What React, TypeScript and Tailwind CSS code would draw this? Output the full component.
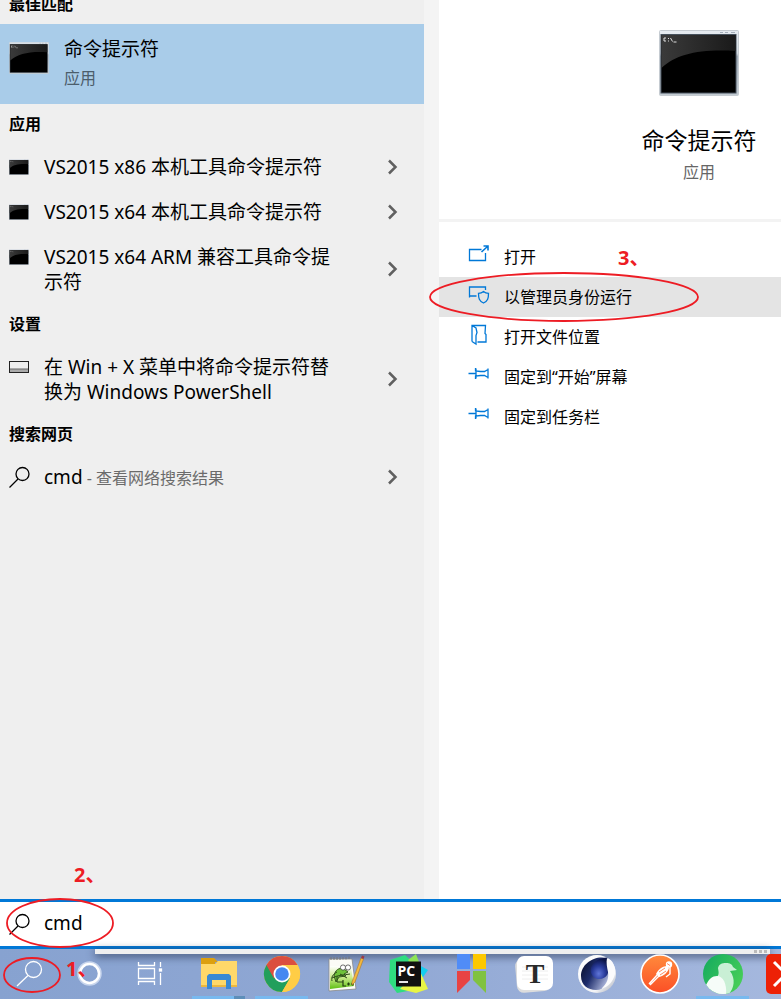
import React, { useState } from 'react';

type IconKind = 'console' | 'settings' | 'search';

interface ResultItem {
  icon: IconKind;
  title: string;
  note?: string;
}

interface ResultGroup {
  heading: string;
  items: ResultItem[];
}

const groups: ResultGroup[] = [
  {
    heading: '应用',
    items: [
      { icon: 'console', title: 'VS2015 x86 本机工具命令提示符' },
      { icon: 'console', title: 'VS2015 x64 本机工具命令提示符' },
      { icon: 'console', title: 'VS2015 x64 ARM 兼容工具命令提示符' },
    ],
  },
  {
    heading: '设置',
    items: [{ icon: 'settings', title: '在 Win + X 菜单中将命令提示符替换为 Windows PowerShell' }],
  },
  {
    heading: '搜索网页',
    items: [{ icon: 'search', title: 'cmd', note: '查看网络搜索结果' }],
  },
];

const ConsoleIcon: React.FC<{ id: string; className: string }> = ({ id, className }) => (
  <svg viewBox="0 0 80 66" preserveAspectRatio="none" className={className} aria-hidden="true">
    <defs>
      <linearGradient id={id} x1="0" y1="0" x2="1" y2="0">
        <stop offset="0" stopColor="#3a3a3a" />
        <stop offset="1" stopColor="#1a1a1a" />
      </linearGradient>
      <linearGradient id={`${id}-frame`} x1="0" y1="0" x2="0" y2="1">
        <stop offset="0" stopColor="#e6ebf0" />
        <stop offset="0.35" stopColor="#d5dde4" />
        <stop offset="0.4" stopColor="#9fabb6" />
        <stop offset="1" stopColor="#c3cbd2" />
      </linearGradient>
    </defs>
    <rect x="0.5" y="0.5" width="79" height="65" rx="1" fill={`url(#${id}-frame)`} stroke="#c5cbd1" />
    <path d="M61 2.5h3M66 2.5h3M72 2.5h4" stroke="#a3adb8" />
    <rect x="2" y="4.5" width="75" height="58.500" fill="#000" stroke="#46515c" />
    <path d="M2.500 5h74v16C40 19 18 24 2.500 38z" fill={`url(#${id})`} />
    <path d="M7 8H5v3h2M9.500 8v1M9.500 10.500v1M11.500 8l2 3.500M14.500 12h3" stroke="#ddd" fill="none" />
  </svg>
);

const SearchIcon: React.FC<{ className: string }> = ({ className }) => (
  <svg viewBox="0 0 22 22" className={className} fill="none" stroke="currentColor" strokeWidth="1.300" aria-hidden="true">
    <circle cx="13.500" cy="8" r="6.500" />
    <path d="M9 13 .5 21.500" />
  </svg>
);

const ResultIcon: React.FC<{ kind: IconKind; id: string }> = ({ kind, id }) => {
  if (kind === 'search') return <SearchIcon className="mt-px h-[22px] w-[22px]" />;
  if (kind === 'settings') {
    return (
      <svg viewBox="0 0 20 12" className="mt-1.5 h-3 w-5" aria-hidden="true">
        <path d="M1 9.500h18" stroke="#aaa" strokeWidth="3" />
        <path d="M1 8h18" stroke="#666" />
        <rect x="0.500" y="0.500" width="19" height="11" fill="none" stroke="#222" />
      </svg>
    );
  }
  return <ConsoleIcon id={id} className="mt-1 h-4 w-5" />;
};

const iconStroke = {
  viewBox: '0 0 22 22',
  className: 'h-[22px] w-[22px] text-[#0078d7]',
  fill: 'none',
  stroke: 'currentColor',
  strokeWidth: 1.300,
  'aria-hidden': true,
};

const pinIcon = (
  <svg {...iconStroke}>
    <path d="M.5 9.500h7M7.500 4v3l5 .5h4l3.500-2V13.500l-3.500-2h-4l-5 .5v3M8 4.500v10M20 4.500v10" />
  </svg>
);

const actions = [
  {
    label: '打开',
    icon: (
      <svg {...iconStroke}>
        <path d="M13.500 5.500H1.500v11h16V9" />
        <path d="m13.500 8 6-5.500M15.500 2h4.500v4.500" strokeWidth="1.600" />
      </svg>
    ),
  },
  {
    label: '以管理员身份运行',
    icon: (
      <svg {...iconStroke}>
        <path d="M17.500 6V3h-16v9h7M1.500 3v10.500" />
        <path d="M15.500 7.500c-1.500 1.300-3.200 1.800-5 1.800 0 5 .6 7.700 5 9.700 4.400-2 5-4.700 5-9.700-1.800 0-3.500-.5-5-1.800z" />
      </svg>
    ),
  },
  {
    label: '打开文件位置',
    icon: (
      <svg {...iconStroke}>
        <path d="M4 17.500V1.500h13.500l-.5 8 1 1v7.500H9.500M4 1.500 8 4l1 4.500-1 3v8.500l-4-2.500" />
      </svg>
    ),
  },
  { label: '固定到“开始”屏幕', icon: pinIcon },
  { label: '固定到任务栏', icon: pinIcon },
];

const AppIcon: React.FC<{ children: React.ReactNode }> = ({ children }) => (
  <svg viewBox="0 0 40 40" className="h-10 w-10" aria-hidden="true">
    {children}
  </svg>
);

const systemButtons = [
  {
    name: '搜索',
    icon: (
      <AppIcon>
        <g fill="none" stroke="#fff" strokeWidth="1.300">
          <circle cx="23.500" cy="15.500" r="8" />
          <path d="M18 21.500 7 32" />
        </g>
      </AppIcon>
    ),
  },
  {
    name: 'Cortana',
    icon: (
      <AppIcon>
        <circle cx="19.500" cy="19.500" r="11" fill="none" stroke="#c7d5ed" strokeWidth="2.500" />
        <circle cx="19.500" cy="19.500" r="9.500" fill="none" stroke="#fff" strokeWidth="2.500" />
      </AppIcon>
    ),
  },
  {
    name: '任务视图',
    icon: (
      <AppIcon>
        <g fill="none" stroke="#fff" strokeWidth="1.300">
          <path d="M8.500 8v3.500h16V8M8.500 31v-3.500h16V31M8.500 14.500h16v10h-16zM30.500 8v5M30.500 19v12" />
          <rect x="29.500" y="15" width="2" height="2" fill="#fff" />
        </g>
      </AppIcon>
    ),
  },
];

const apps = [
  {
    name: '文件资源管理器',
    mark: 'multi',
    icon: (
      <AppIcon>
        <path d="M2 4h13l4 4h-3v5H2z" fill="#dc9f10" />
        <path d="M2 10h14l3-3h19v26H2z" fill="#ffd869" />
        <path d="M2 31h36v2H2z" fill="#edb83e" />
        <path d="M8 35V22l2-2h20l2 2v13h-5v-9H13v9z" fill="#3989d4" />
      </AppIcon>
    ),
  },
  {
    name: 'Google Chrome',
    mark: 'single',
    icon: (
      <AppIcon>
        <circle cx="20" cy="20" r="18" fill="#ffcd46" />
        <path d="M4.400 11A18 18 0 0 0 20 38l7.800-13.500L20 20z" fill="#229f5c" />
        <path d="M4.400 11 12 24.500 20 11h15.600A18 18 0 0 0 4.400 11z" fill="#db4e3f" />
        <path d="M20 11h15.600A18 18 0 0 1 20 38l8-13.500z" fill="#ffcd46" />
        <circle cx="20" cy="20" r="8.500" fill="#fff" />
        <circle cx="20" cy="20" r="6.800" fill="#4688f1" />
      </AppIcon>
    ),
  },
  {
    name: 'Notepad++',
    mark: '',
    icon: (
      <AppIcon>
        <defs>
          <linearGradient id="grass" x1="0" y1="0" x2="0" y2="1">
            <stop offset="0" stopColor="#fff" />
            <stop offset="0.5" stopColor="#c9eb8a" />
            <stop offset="1" stopColor="#5fbf14" />
          </linearGradient>
        </defs>
        <path d="M4 5h23l4 30-27 2z" fill="#fbfbf6" stroke="#888" strokeWidth="0.800" />
        <path d="M5 12h21l3 20-24 3z" fill="url(#grass)" />
        <path d="M6 6V3M9 6V3M12 6V3M15 6V3M18 5.500V3M21 5.500V3M24 5V2.500" stroke="#777" />
        <path d="M9 22c1-6 5-9 10-7l4 3-4 2 2 2-7 1-3 5z" fill="#6fc23a" stroke="#2c4b18" strokeWidth="0.900" />
        <path d="M7 24c6-3 12-3 18-4M7 27c-1-4 1-7 5-9M12 22v6h6M15 20l7 4" fill="none" stroke="#2c4b18" />
        <circle cx="18" cy="13.500" r="2.600" fill="#fff" stroke="#333" strokeWidth="0.700" />
        <circle cx="23" cy="13.500" r="2.600" fill="#fff" stroke="#333" strokeWidth="0.700" />
        <path d="M18 26v6h3M22 30h3M26 30h3M23.500 28.500v3M27.500 28.500v3" stroke="#243d13" strokeWidth="1.200" fill="none" />
        <path d="m27 28 9-24 2.500 1-8.500 23-3 3z" fill="#f4b83d" stroke="#a9772b" strokeWidth="0.600" />
        <path d="m36 4 1-2.500 2.500 1-1 2.500z" fill="#9d3946" />
      </AppIcon>
    ),
  },
  {
    name: 'PyCharm',
    mark: '',
    icon: (
      <AppIcon>
        <path d="M2 6 17 1l10 9-7 27-11 2-8-11z" fill="#2fdc80" />
        <path d="m20 6 8-6 3 8-3 8z" fill="#8ee457" />
        <path d="m31 11 9 5-7 10z" fill="#16cdee" />
        <path d="m31 15 9 20-12 4-16-4z" fill="#e8f544" />
        <rect x="8" y="7.500" width="25" height="25" fill="#111" />
        <text x="9.500" y="22" fill="#fff" className="font-['Open_Sans',sans-serif] text-[14px] font-bold">PC</text>
        <path d="M11 28h9" stroke="#fff" strokeWidth="1.800" />
      </AppIcon>
    ),
  },
  {
    name: '书签',
    mark: '',
    icon: (
      <AppIcon>
        <path d="M6 0h13v15H6z" fill="#508cf7" />
        <path d="M22 0h13v15H22z" fill="#fdc800" />
        <path d="M6 17h13v9L6 39z" fill="#e84343" />
        <path d="M22 17h13v22L22 26z" fill="#80c241" />
      </AppIcon>
    ),
  },
  {
    name: 'Typora',
    mark: '',
    icon: (
      <AppIcon>
        <rect x="2" y="4" width="34" height="34" rx="7" fill="#ddd" transform="rotate(-5 19 21)" />
        <rect x="3" y="2" width="36" height="34" rx="7" fill="#fff" />
        <path d="M8 13h26M8 17h26M8 21h26M8 25h26" stroke="#eee" />
        <text x="21" y="29" textAnchor="middle" fill="#292929" className="font-['Liberation_Serif',serif] text-[28px] font-bold">T</text>
      </AppIcon>
    ),
  },
  {
    name: 'Cinema 4D',
    mark: '',
    icon: (
      <AppIcon>
        <defs>
          <linearGradient id="shell" x1="0" y1="0" x2="1" y2="1">
            <stop offset="0" stopColor="#fff" />
            <stop offset="0.7" stopColor="#f2f3f5" />
            <stop offset="1" stopColor="#9da3b3" />
          </linearGradient>
          <linearGradient id="hollow" x1="0" y1="0" x2="1" y2="0.6">
            <stop offset="0" stopColor="#070b22" />
            <stop offset="0.5" stopColor="#1d2c6b" />
            <stop offset="1" stopColor="#aab4da" />
          </linearGradient>
          <radialGradient id="lens" cx="0.45" cy="0.75" r="0.7">
            <stop offset="0" stopColor="#6076d8" />
            <stop offset="0.5" stopColor="#2a3c9c" />
            <stop offset="1" stopColor="#0a1346" />
          </radialGradient>
        </defs>
        <circle cx="20" cy="20" r="19" fill="url(#shell)" />
        <path d="M30 4C17 1 4 10 4 22c0 9 7 14 15 14 9 0 13-7 13-14 0-6-2-11 1-15z" fill="url(#hollow)" />
        <path d="M31 4c-5-1-11 1-15 6-5 6-1 15 6 15 8 0 11-7 9-14z" fill="url(#lens)" />
        <path d="M30 4c6 2 9 9 8 16-2 8-7 13-14 15 6-5 8-11 7-17-1-5-2-9-1-14z" fill="#fbfbfc" />
      </AppIcon>
    ),
  },
  {
    name: 'Postman',
    mark: '',
    icon: (
      <AppIcon>
        <defs>
          <linearGradient id="ember" x1="0" y1="0" x2="0" y2="1">
            <stop offset="0" stopColor="#ff8a3c" />
            <stop offset="1" stopColor="#fb4f26" />
          </linearGradient>
        </defs>
        <circle cx="20" cy="20" r="19" fill="url(#ember)" stroke="#fff" strokeWidth="1.600" />
        <path d="M27 12c-5 0-9 4-11 8l3 3c5-1 9-5 10-9z" fill="#fff" />
        <circle cx="29" cy="10.500" r="3.200" fill="#fff" />
        <path d="m18 20-9 10M19 22l-9 9M30 13v7l-4 3" fill="none" stroke="#fff" strokeWidth="1.400" />
        <path d="m19 18 6-4M20 21l6-4M27 9.500l3 2" stroke="#ff6c37" strokeWidth="0.800" />
      </AppIcon>
    ),
  },
  {
    name: '浏览器',
    mark: 'single',
    icon: (
      <AppIcon>
        <defs>
          <linearGradient id="leaf" x1="0" y1="0" x2="1" y2="0.6">
            <stop offset="0" stopColor="#12a95f" />
            <stop offset="1" stopColor="#45cd58" />
          </linearGradient>
          <clipPath id="leaf-clip">
            <circle cx="20" cy="20" r="20" />
          </clipPath>
        </defs>
        <circle cx="20" cy="20" r="20" fill="url(#leaf)" />
        <g clipPath="url(#leaf-clip)">
          <path d="M14 23c3-3 1-7 1-9 1-4 4-5 8-5 4 0 6 1 7 4l4 3-7 1c6 8 4 17-1 23H14z" fill="#c9efd5" />
          <path d="M3 31c3-6 6-9 11-9 6 0 10 8 9 18H3z" fill="#f6fcf8" />
        </g>
      </AppIcon>
    ),
  },
  {
    name: 'XMind',
    mark: '',
    icon: (
      <AppIcon>
        <rect width="40" height="40" rx="5" fill="#ed2106" />
        <path d="m8 8 12 12L8 32M32 8 20 20l12 12" fill="none" stroke="#fff" strokeWidth="3" />
      </AppIcon>
    ),
  },
];

const noteText = 'pointer-events-none absolute text-xl leading-6 font-bold text-[#ed1c24]';

const App: React.FC = () => {
  const [query, setQuery] = useState('cmd');

  return (
    <div className="flex min-h-screen flex-col overflow-hidden bg-white font-['Noto_Sans','Noto_Sans_CJK_SC',sans-serif] text-black">
      <main className="grid flex-1 grid-cols-[439fr_342fr]">
        {/* Lista de resultados */}
        <section className="relative overflow-hidden bg-[#f4f4f4] pr-[15px]">
          <div className="-mt-4 h-[calc(100%+16px)] bg-[#efefef]">
            <h2 className="flex h-10 items-center px-[9px] text-base font-bold">最佳匹配</h2>
            <button className="flex h-20 w-full items-start bg-[#a9cce9] px-[9px] pt-3 text-left">
              <ConsoleIcon id="best" className="mt-1.5 h-8 w-10 shrink-0" />
              <span className="ml-[15px] flex flex-col pt-px">
                <span className="text-[19px] leading-[25px]">命令提示符</span>
                <span className="mt-1 text-base leading-6 text-[#4c5d6b]">应用</span>
              </span>
            </button>

            {groups.map((group, g) => (
              <div key={group.heading}>
                <h2 className="flex h-10 items-center px-[9px] text-base font-bold">{group.heading}</h2>
                <ul>
                  {group.items.map((item, i) => (
                    <li key={item.title} className="flex items-stretch">
                      <button className="flex flex-1 items-start pt-[11px] pb-[9px] pl-[9px] text-left">
                        <span className="flex w-[35px] shrink-0">
                          <ResultIcon kind={item.icon} id={`result-${g}-${i}`} />
                        </span>
                        <span className="text-[19px] leading-[25px]">
                          {item.title}
                          {item.note && <span className="text-base text-[#6b6b6b]"> - {item.note}</span>}
                        </span>
                      </button>
                      <button aria-label={`展开 ${item.title}`} className="flex w-[84px] shrink-0 items-center pl-12">
                        <svg viewBox="0 0 10 16" className="h-4 w-2.5" aria-hidden="true">
                          <path d="m1 1.500 6.500 6.500L1 14.500" fill="none" stroke="#606060" strokeWidth="2.500" />
                        </svg>
                      </button>
                    </li>
                  ))}
                </ul>
              </div>
            ))}
          </div>
          <span className={`${noteText} bottom-3 left-[74px]`}>2、</span>
        </section>

        {/* Panel de detalle */}
        <section>
          <div className="flex h-[222px] flex-col items-center border-b-[3px] border-[#f3f3f3] pt-[30px] pl-[178px]">
            <ConsoleIcon id="detail" className="h-[66px] w-20" />
            <h1 className="mt-7 text-[23px] leading-8">命令提示符</h1>
            <p className="mt-1 text-base leading-6 text-[#666]">应用</p>
          </div>
          <ul className="relative pt-[15px]">
            {actions.map((action, i) => (
              <li key={action.label} className="relative">
                <button className={`flex h-10 w-full items-center pl-[29px] text-left text-base ${i === 1 ? 'bg-[#e4e4e4]' : 'bg-white'}`}>
                  <span className="mb-1 w-9 shrink-0">{action.icon}</span>
                  {action.label}
                </button>
                {i === 1 && (
                  <svg viewBox="0 0 270 50" className="pointer-events-none absolute -top-[5px] -left-[10px] z-10 h-[50px] w-[270px]" aria-hidden="true">
                    <ellipse cx="135" cy="25" rx="134" ry="24" fill="none" stroke="#ed1c24" strokeWidth="1.800" />
                  </svg>
                )}
              </li>
            ))}
            <li className={`${noteText} top-6 left-[179px]`}>3、</li>
          </ul>
        </section>
      </main>

      {/* Caja de búsqueda */}
      <label className="relative flex h-[50px] items-center border-y-[3px] border-[#0078d7] bg-white pl-[9px]">
        <SearchIcon className="h-[22px] w-[22px] shrink-0" />
        <input
          aria-label="搜索"
          value={query}
          onChange={(e) => setQuery(e.target.value)}
          className="ml-[13px] min-w-0 flex-1 pb-0.5 text-[19px] outline-none"
        />
        <svg viewBox="0 0 110 50" className="pointer-events-none absolute -top-1 left-[5px] z-10 h-[50px] w-[110px]" aria-hidden="true">
          <ellipse cx="55" cy="25" rx="53" ry="24" fill="none" stroke="#ed1c24" strokeWidth="1.800" />
        </svg>
      </label>

      {/* Barra de tareas */}
      <nav className="relative flex h-[50px] shrink-0 bg-linear-to-r from-[#87a2d0] via-[#91a8d4] to-[#a5b8de]">
        <div className="absolute top-0 right-[11px] left-[95px] flex h-[5px] items-center justify-end gap-0.5 bg-[#efefef] pr-[3px] shadow-[0_2px_8px_#2c3a58]">
          <i className="h-[3px] w-[3px] bg-[#bbb]" />
          <i className="h-[3px] w-[3px] bg-[#bbb]" />
          <i className="h-[3px] w-[3px] bg-[#bbb]" />
        </div>
        {systemButtons.map((item) => (
          <button key={item.name} aria-label={item.name} className="relative flex w-[60px] shrink-0 items-center justify-center">
            {item.icon}
          </button>
        ))}
        <div className="ml-[7px] flex">
          {apps.map((app) => (
            <button key={app.name} aria-label={app.name} className="relative flex w-[63px] shrink-0 items-center justify-center">
              {app.icon}
              {app.mark && (
                <span className="absolute bottom-0 left-[5px] flex h-[3px] w-[53px] bg-[#78b9ef]">
                  {app.mark === 'multi' && <span className="ml-auto w-[11px] bg-[#5d8eb9]" />}
                </span>
              )}
            </button>
          ))}
        </div>
        <svg viewBox="0 0 58 36" className="pointer-events-none absolute top-2 left-[3px] h-9 w-[58px]" aria-hidden="true">
          <ellipse cx="29" cy="18" rx="28" ry="17" fill="none" stroke="#ed1c24" strokeWidth="1.800" />
        </svg>
        <span className={`${noteText} top-2 left-[66px]`}>1、</span>
      </nav>
    </div>
  );
};

export default App;
